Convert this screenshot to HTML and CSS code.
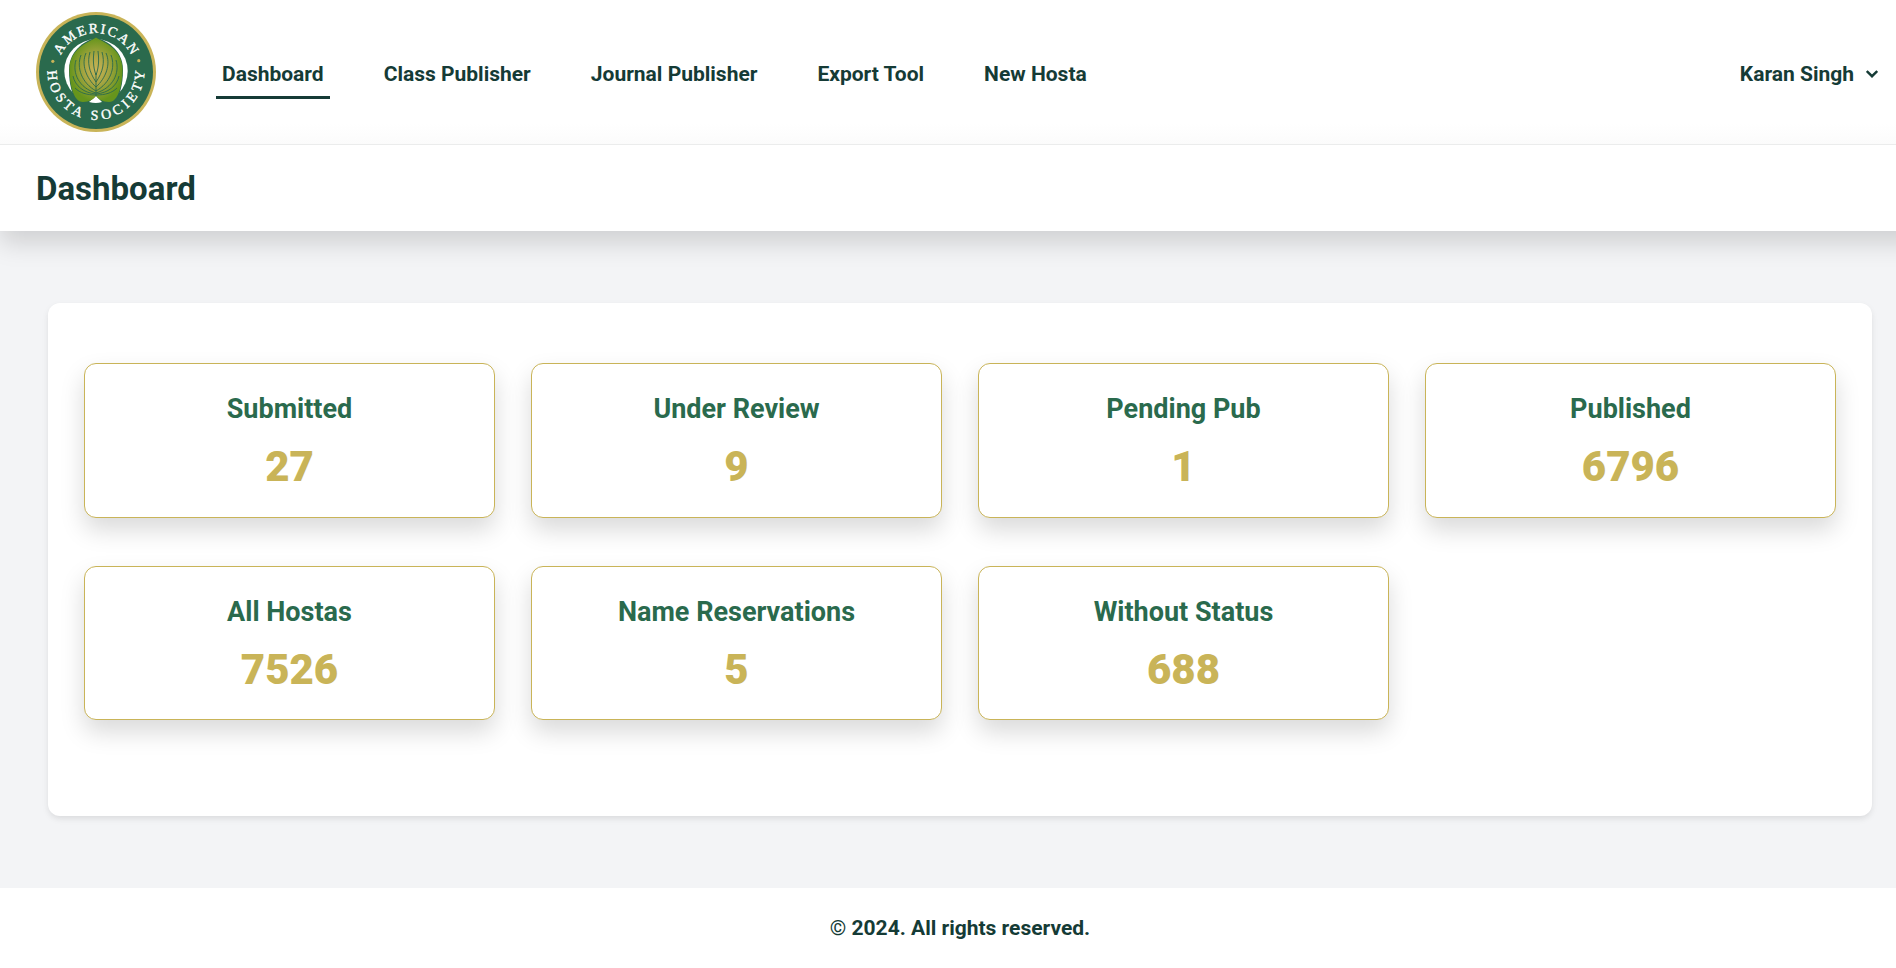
FILE: index.html
```html
<!DOCTYPE html>
<html lang="en">
<head>
<meta charset="utf-8">
<title>Dashboard</title>
<link rel="stylesheet" href="styles.css">
</head>
<body>
<header class="topbar">
  <svg class="logo" viewBox="-60 -60 120 120" role="img" aria-label="American Hosta Society">
    <defs>
      <path id="arc-top" d="M-39 0A39 39 0 0 1 39 0"/>
      <path id="arc-bottom" d="M-48.200 -5A48.400 48.400 0 1 0 48.200 -5"/>
      <radialGradient id="leaf" cx="50%" cy="50%" r="55%">
        <stop offset="0" stop-color="#c9b457"/>
        <stop offset=".4" stop-color="#a9a643"/>
        <stop offset=".9" stop-color="#66951c"/>
      </radialGradient>
    </defs>
    <circle r="60" fill="#c9b458"/>
    <circle r="57" fill="#2a6a4d"/>
    <circle cy="-1" r="31.700" fill="#fff"/>
    <path d="M0 -34C-7 -33 -27 -24 -27 -2C-27 12 -24 24 -18 31L18 31C24 24 27 12 27 -2C27 -24 7 -33 0 -34Z" fill="#2a6a4d"/>
    <path d="M-7 30Q0 32 6 30L0 24Z" fill="#fff"/>
    <path d="M0 -34.500C-5 -31 -26.500 -24 -26.500 -3C-26.500 11 -23 30 -13 30C-7 30 -1 27 0 23C1 27 7 30 13 30C23 30 26.500 11 26.500 -3C26.500 -24 5 -31 0 -34.500Z" fill="url(#leaf)"/>
    <g class="logo-veins">
      <path d="M0 24V1"/>
      <path d="M0 3C-3 -5 -3 -13 -2 -21M0 3C3 -5 3 -13 2 -21"/>
      <path d="M0 10C-7 0 -9 -10 -6 -20M0 10C7 0 9 -10 6 -20"/>
      <path d="M0 15C-10 6 -15 -8 -10 -19M0 15C10 6 15 -8 10 -19"/>
      <path d="M0 19C-14 11 -20 -4 -15 -17M0 19C14 11 20 -4 15 -17"/>
      <path d="M0 21C-17 16 -24 1 -20 -12M0 21C17 16 24 1 20 -12"/>
      <path d="M0 22C-12 21 -21 14 -23 4M0 22C12 21 21 14 23 4"/>
      <path d="M0 23C-9 23 -16 21 -21 16M0 23C9 23 16 21 21 16"/>
    </g>
    <circle cx="-43.200" cy="-10.700" r="1.600" fill="#c9b458"/>
    <circle cx="42.800" cy="-11.300" r="1.600" fill="#c9b458"/>
    <text class="logo-text"><textPath href="#arc-top" startOffset="50%" text-anchor="middle" textLength="88">AMERICAN</textPath></text>
    <text class="logo-text"><textPath href="#arc-bottom" startOffset="50%" text-anchor="middle" textLength="153">HOSTA SOCIETY</textPath></text>
  </svg>
  <nav class="nav">
    <a class="nav-link active">Dashboard</a>
    <a class="nav-link">Class Publisher</a>
    <a class="nav-link">Journal Publisher</a>
    <a class="nav-link">Export Tool</a>
    <a class="nav-link">New Hosta</a>
  </nav>
  <div class="user">
    <span>Karan Singh</span>
    <svg class="chevron" viewBox="0 0 12 8"><path d="M.8 1L6 6.200L11.200 1"/></svg>
  </div>
</header>
<div class="page-head"><h1 class="page-title">Dashboard</h1></div>
<main class="main">
  <section class="panel">
    <div class="card"><h2 class="label">Submitted</h2><p class="count">27</p></div>
    <div class="card"><h2 class="label">Under Review</h2><p class="count">9</p></div>
    <div class="card"><h2 class="label">Pending Pub</h2><p class="count">1</p></div>
    <div class="card"><h2 class="label">Published</h2><p class="count">6796</p></div>
    <div class="card"><h2 class="label">All Hostas</h2><p class="count">7526</p></div>
    <div class="card"><h2 class="label">Name Reservations</h2><p class="count">5</p></div>
    <div class="card"><h2 class="label">Without Status</h2><p class="count">688</p></div>
  </section>
</main>
<footer class="footer"><span class="copy">©</span>&nbsp;2024. All rights reserved.</footer>
</body>
</html>
```
FILE: styles.css
```css
* { box-sizing: border-box; }

body {
  margin: 0;
  height: 968px;
  display: flex;
  flex-direction: column;
  background: #f3f4f6;
  color: #153b36;
  font-family: Roboto, sans-serif;
  font-size: 21px;
  font-weight: 700;
  line-height: 30px;
  overflow: hidden;
}

.topbar {
  height: 145px;
  flex: none;
  display: flex;
  align-items: center;
  padding: 0 18px 0 36px;
  background: linear-gradient(#fff 124px, #fbfbfb 144px);
  border-bottom: 1px solid #ebecec;
}

.logo { width: 120px; height: 120px; flex: none; }
.logo-veins { fill: none; stroke: #2a6a4d; stroke-width: .9; }
.logo-text {
  fill: #fff;
  stroke: #fff;
  stroke-width: .35;
  font-family: "Liberation Serif", serif;
  font-size: 14px;
  font-weight: 400;
}

.nav { display: flex; gap: 48px; margin-left: 60px; padding-top: 2px; }
.nav-link { padding: 12px 6px 7px; border-bottom: 3px solid transparent; }
.nav-link.active { border-color: #153b36; }

.user { display: flex; align-items: center; gap: 12px; margin-left: auto; padding-top: 4px; }
.chevron { width: 12px; height: 8px; fill: none; stroke: #153b36; stroke-width: 2.4; }

.page-head {
  height: 86px;
  flex: none;
  display: flex;
  align-items: center;
  margin-right: -24px;
  padding: 2px 36px 0;
  background: #fff;
  box-shadow: 0 12px 24px rgba(0, 0, 0, .15);
  clip-path: inset(0 0 -60px 0);
}
.page-title { margin: 0; font-size: 33px; font-weight: 700; line-height: 40px; }

.main { flex: 1; padding: 72px 24px 72px 48px; }

.panel {
  height: 513px;
  display: grid;
  grid-template-columns: repeat(4, 1fr);
  grid-template-rows: 155px 154px;
  gap: 48px 36px;
  padding: 60px 36px;
  background: #fff;
  border-radius: 12px;
  box-shadow: 0 3px 9px -1px rgba(0, 0, 0, .07), 0 3px 6px -1.5px rgba(0, 0, 0, .05);
}

.card {
  padding-top: 27px;
  text-align: center;
  background: #fff;
  border: 1px solid #c9b458;
  border-radius: 12px;
  box-shadow: 0 12px 24px rgba(0, 0, 0, .15);
}
.label { margin: 0; font-size: 27px; font-weight: 700; line-height: 36px; color: #2a6a4d; }
.count { margin: 13px 0 0; font-size: 42px; font-weight: 900; line-height: 54px; color: #c9b458; }

.footer {
  height: 80px;
  flex: none;
  display: flex;
  align-items: center;
  justify-content: center;
  padding-left: 24px;
  background: #fff;
}
.copy { font-weight: 400; }
```
